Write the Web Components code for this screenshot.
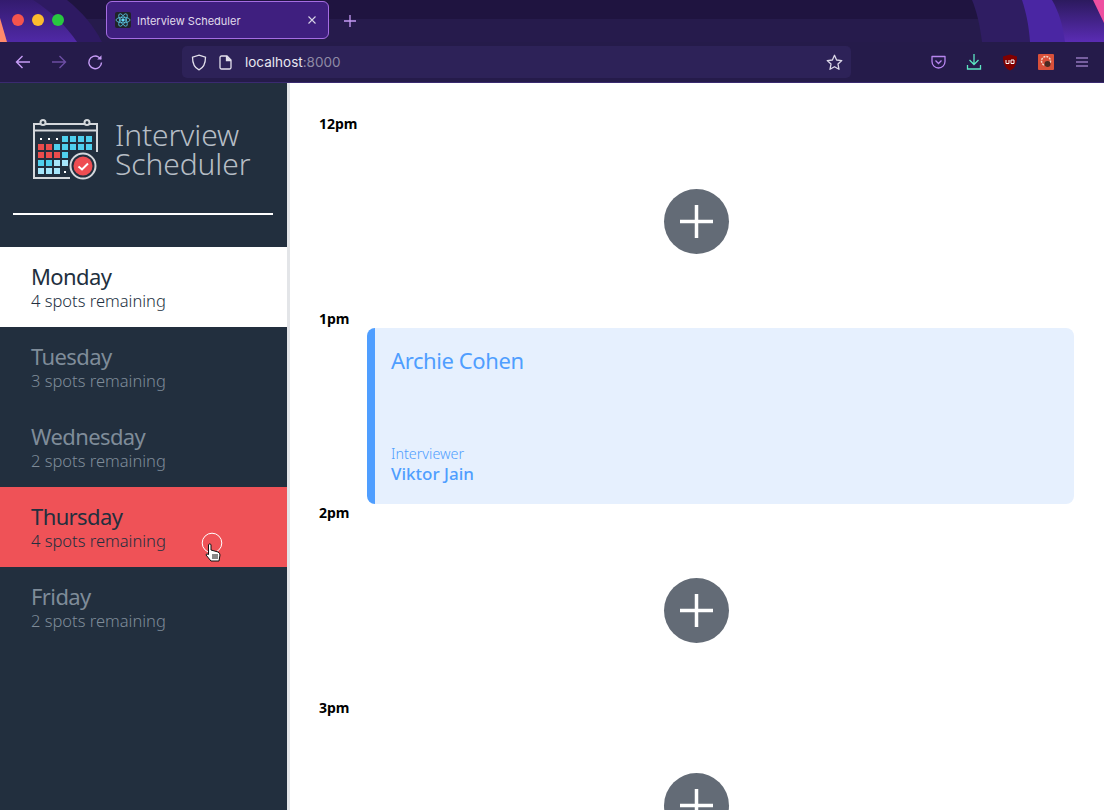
<!DOCTYPE html>
<html>
<head>
<meta charset="utf-8">
<title>Interview Scheduler</title>
<style>
  html, body { margin: 0; height: 100%; overflow: hidden; background: #fff; }
  body { display: flex; flex-direction: column; font-family: "Noto Sans", "Open Sans", sans-serif; }
</style>
</head>
<body>
<browser-chrome></browser-chrome>
<scheduler-app>
  <side-bar slot="nav">
    <day-item name="Monday" spots="4 spots remaining" state="selected"></day-item>
    <day-item name="Tuesday" spots="3 spots remaining"></day-item>
    <day-item name="Wednesday" spots="2 spots remaining"></day-item>
    <day-item name="Thursday" spots="4 spots remaining" state="hover"></day-item>
    <day-item name="Friday" spots="2 spots remaining"></day-item>
  </side-bar>
  <time-slot time="12pm"><add-button></add-button></time-slot>
  <time-slot time="1pm"><show-card student="Archie Cohen" interviewer="Viktor Jain"></show-card></time-slot>
  <time-slot time="2pm"><add-button></add-button></time-slot>
  <time-slot time="3pm"><add-button></add-button></time-slot>
</scheduler-app>

<script>
class BrowserChrome extends HTMLElement {
    constructor() {
        super();
        this.attachShadow({ mode: 'open' });
    }

    static get styles() {
        return `
        :host { display: block; height: 83px; flex: none; position: relative; background: #251b4a; color: #fbfbfe; font-family: "Inter", "Liberation Sans", sans-serif; overflow: hidden; }
        .art { position: absolute; left: 0; top: 0; }
        .tabs { position: relative; height: 42px; display: flex; align-items: flex-start; }
        .lights { display: flex; gap: 8px; padding: 14px 0 0 12px; width: 94px; }
        .lights i { width: 12px; height: 12px; border-radius: 50%; }
        .tab { margin-top: 1px; width: 223px; height: 38px; box-sizing: border-box; border: 1px solid #a56de2; border-radius: 6px; background: #3f1f7f; display: flex; align-items: center; padding: 2px 11px 0 8px; font-size: 11px; color: #e0dcec; }
        .favicon { width: 16px; height: 16px; background: #20232a; border-radius: 2px; margin-right: 6px; margin-top: -2px; }
        .tab span { flex: 1; }
        .tab .close { margin-top: -2px; }
        .plus { margin: 14px 0 0 14px; }
        .bar { position: relative; height: 40px; display: flex; align-items: center; border-bottom: 1px solid #3a2a70; }
        .nav { display: flex; gap: 20px; width: 182px; padding-left: 15px; box-sizing: border-box; }
        .url { width: 669px; height: 32px; background: #2d2258; border-radius: 5px; display: flex; align-items: center; padding: 0 8px 0 9px; box-sizing: border-box; font-size: 13.5px; color: #e8e6f0; }
        .url .port { color: #8f8aa5; }
        .url .addr { flex: 1; margin-left: 13px; }
        .url .page { margin-left: 12px; }
        .tools { flex: 1; display: flex; align-items: center; padding-left: 69px; }
        .tools b { width: 36px; display: flex; justify-content: center; }
        svg { display: block; flex: none; }
        `;
    }

    connectedCallback() {
        this.render();
    }

    render() {
        this.shadowRoot.innerHTML = /* html */`
            <style>${BrowserChrome.styles}</style>
            <svg class="art" width="1104" height="83" viewBox="0 0 1104 83">
                <defs>
                    <linearGradient id="band" x1="0" y1="0" x2="0" y2="1">
                        <stop offset="0" stop-color="#331b6e"/>
                        <stop offset="1" stop-color="#5029a6"/>
                    </linearGradient>
                    <linearGradient id="band2" x1="0" y1="0" x2="0" y2="1">
                        <stop offset="0" stop-color="#2c1a5e"/>
                        <stop offset="1" stop-color="#5a2cb4"/>
                    </linearGradient>
                </defs>
                <rect width="1104" height="19" fill="#1f1440"/>
                <rect y="19" width="1104" height="23" fill="#261b4c"/>
                <path d="M0 0H67C82 12 94 26 102 42H0Z" fill="#2e1a62"/>
                <path d="M0 0H33C52 12 66 26 77 42H0Z" fill="url(#band)"/>
                <path d="M0 18L7 42H0Z" fill="#ff8a6b"/>
                <path d="M972 0H1104V42H982C980 26 977 12 972 0Z" fill="#2f1d62"/>
                <path d="M1022 0H1104V42H1030C1029 26 1026 12 1022 0Z" fill="#4a26a3"/>
                <path d="M1052 0H1104V42H1065C1063 26 1059 12 1052 0Z" fill="url(#band2)"/>
                <path d="M1093 0H1104V23Z" fill="#ee4fa0"/>
            </svg>
            <div class="tabs">
                <div class="lights">
                    <i style="background:#f5544d"></i><i style="background:#fcbc2e"></i><i style="background:#28c840"></i>
                </div>
                <div class="tab">
                    <svg class="favicon" viewBox="0 0 16 16" fill="none" stroke="#61dafb" stroke-width=".7">
                        <circle cx="8" cy="8" r="1.3" fill="#61dafb"/>
                        <ellipse cx="8" cy="8" rx="7" ry="2.8"/>
                        <ellipse cx="8" cy="8" rx="7" ry="2.8" transform="rotate(60 8 8)"/>
                        <ellipse cx="8" cy="8" rx="7" ry="2.8" transform="rotate(120 8 8)"/>
                    </svg>
                    <span>Interview Scheduler</span>
                    <svg class="close" width="10" height="10" viewBox="0 0 10 10" stroke="#d8d4e6" stroke-width="1.1"><path d="M1.5 1.5l7 7M8.5 1.5l-7 7"/></svg>
                </div>
                <svg class="plus" width="14" height="14" viewBox="0 0 14 14" stroke="#c59bf5" stroke-width="1.3"><path d="M7 1v12M1 7h12"/></svg>
            </div>
            <div class="bar">
                <div class="nav">
                    <svg width="16" height="16" viewBox="0 0 16 16" fill="none" stroke="#c69cf6" stroke-width="1.4"><path d="M15 8H1.5M7.5 2L1.5 8l6 6"/></svg>
                    <svg width="16" height="16" viewBox="0 0 16 16" fill="none" stroke="#6c4da3" stroke-width="1.4"><path d="M1 8h13.5M8.5 2l6 6-6 6"/></svg>
                    <svg width="16" height="16" viewBox="0 0 16 16" fill="none" stroke="#c69cf6" stroke-width="1.4"><path d="M14.5 8.5A6.3 6.3 0 1 1 11.5 3L14 5"/><path d="M14.5 1.2V5.500H10.200" fill="#c69cf6" stroke="none"/></svg>
                </div>
                <div class="url">
                    <svg width="16" height="17" viewBox="0 0 16 17" fill="none" stroke="#e3e0ec" stroke-width="1.3"><path d="M8 1.200L14.500 3.200C14.500 9 13 13.500 8 15.800 3 13.500 1.500 9 1.500 3.200Z"/></svg>
                    <svg class="page" width="13" height="15" viewBox="0 0 13 15" fill="none" stroke="#e3e0ec" stroke-width="1.3"><path d="M2.500 1H8L12 5V12.500A1.500 1.500 0 0 1 10.500 14H2.500A1.500 1.500 0 0 1 1 12.500V2.500A1.500 1.500 0 0 1 2.500 1Z"/><path d="M7.500 1V5.500H12" fill="#e3e0ec"/></svg>
                    <span class="addr">localhost<span class="port">:8000</span></span>
                    <svg width="17" height="17" viewBox="0 0 17 17" fill="none" stroke="#dcd8e8" stroke-width="1.3" stroke-linejoin="round"><path d="M8.500 1.300L10.600 6 15.800 6.600 12 10.100 13 15.300 8.500 12.700 4 15.300 5 10.100 1.200 6.600 6.400 6Z"/></svg>
                </div>
                <div class="tools">
                    <b><svg width="15" height="14" viewBox="0 0 15 14" fill="none" stroke="#b886f0" stroke-width="1.3"><path d="M1 1.500H14V6.500A6.500 6.500 0 0 1 1 6.500Z" stroke-linejoin="round"/><path d="M4.500 5.500L7.500 8.500 10.500 5.500"/></svg></b>
                    <b><svg width="16" height="16" viewBox="0 0 16 16" fill="none" stroke="#5ce6c2" stroke-width="1.3"><path d="M8 0V10M3.500 6L8 10.500 12.500 6M1.500 11V15H14.500V11"/></svg></b>
                    <b><svg width="16" height="17" viewBox="0 0 16 17"><path d="M8 0.500L15 2.500C15 9 13.500 14 8 16.500 2.500 14 1 9 1 2.500Z" fill="#800000"/><path d="M4 6V9.500H7V6M9 6H12V9.500H9Z" fill="none" stroke="#fff" stroke-width="1"/></svg></b>
                    <b><svg width="16" height="16" viewBox="0 0 16 16"><rect width="16" height="16" rx="1" fill="#d9503a"/><circle cx="8" cy="7" r="4.500" fill="none" stroke="#f6d5c8" stroke-width="1.500" stroke-dasharray="2 1"/><circle cx="9.500" cy="10" r="3" fill="#4a2a22"/></svg></b>
                    <b><svg width="12" height="10" viewBox="0 0 12 10" stroke="#c9a3f5" stroke-width="1.200"><path d="M0 1h12M0 5h12M0 9h12"/></svg></b>
                </div>
            </div>
        `;
    }
}

class SchedulerApp extends HTMLElement {
    constructor() {
        super();
        this.attachShadow({ mode: 'open' });
    }

    connectedCallback() {
        this.shadowRoot.innerHTML = /* html */`
            <style>
            :host { display: flex; flex: 1; min-height: 0; overflow: hidden; }
            main { flex: 1; padding: 33px 30px 0 29px; }
            </style>
            <slot name="nav"></slot>
            <main><slot></slot></main>
        `;
    }
}

class SideBar extends HTMLElement {
    constructor() {
        super();
        this.attachShadow({ mode: 'open' });
    }

    connectedCallback() {
        this.shadowRoot.innerHTML = /* html */`
            <style>
            :host { display: flex; flex-direction: column; width: 287px; flex: none; background: #222f3e; border-right: 3px solid #e3e5e8; box-sizing: content-box; }
            header { height: 164px; box-sizing: border-box; padding: 36px 13px 0; }
            .brand { display: flex; align-items: center; gap: 17px; padding-left: 20px; height: 61px; color: #b6bdc5; font: 300 30px/29px "Noto Sans", sans-serif; }
            .brand span { margin-top: -2px; letter-spacing: -.1px; }
            hr { border: 0; height: 2px; background: #fff; margin: 33px 1px 0 0; }
            .cells rect { width: 6px; height: 6px; }
            </style>
            <header>
                <div class="brand">
                    <svg width="65" height="61" viewBox="0 0 65 61" style="flex:none">
                        <g fill="none" stroke="#d5d8dc" stroke-width="2">
                            <path d="M37 59H1V5H64V33"/>
                            <path d="M1 11.500H64"/>
                            <circle cx="10" cy="3.500" r="2.500" fill="#222f3e"/>
                            <circle cx="54" cy="3.500" r="2.500" fill="#222f3e"/>
                        </g>
                        <g fill="#fff"><rect x="7" y="19" width="2" height="2"/><rect x="15" y="19" width="2" height="2"/><rect x="23" y="19" width="2" height="2"/></g>
                        <g class="cells" fill="#4fd0ee">
                            <rect x="29" y="17"/><rect x="37" y="17"/><rect x="45" y="17"/><rect x="53" y="17"/>
                            <rect x="21" y="25"/><rect x="29" y="25"/><rect x="37" y="25"/><rect x="45" y="25"/><rect x="53" y="25"/>
                            <rect x="29" y="33"/><rect x="5" y="41"/><rect x="13" y="41"/>
                        </g>
                        <g class="cells" fill="#ea4c4c">
                            <rect x="5" y="25"/><rect x="13" y="25"/>
                            <rect x="5" y="33"/><rect x="13" y="33"/><rect x="21" y="33"/>
                        </g>
                        <g class="cells" fill="#a6e6fb">
                            <rect x="21" y="41"/><rect x="29" y="41"/>
                            <rect x="5" y="49"/><rect x="13" y="49"/><rect x="21" y="49"/>
                        </g>
                        <rect x="31" y="52" width="2" height="2" fill="#fff"/>
                        <circle cx="50" cy="47" r="12.500" fill="#222f3e" stroke="#d5d8dc" stroke-width="2"/>
                        <circle cx="50" cy="47" r="9.500" fill="#ee4d52"/>
                        <path d="M45.500 47.500L49 50.500 55 44.500" fill="none" stroke="#fff" stroke-width="2"/>
                    </svg>
                    <span>Interview<br>Scheduler</span>
                </div>
                <hr>
            </header>
            <slot></slot>
        `;
    }
}

class DayItem extends HTMLElement {
    constructor() {
        super();
        this.attachShadow({ mode: 'open' });
    }

    connectedCallback() {
        const hover = this.getAttribute('state') === 'hover';
        this.shadowRoot.innerHTML = /* html */`
            <style>
            :host { display: block; position: relative; height: 80px; box-sizing: border-box; padding: 14px 0 0 31px; color: #7f8c99; font-family: "Noto Sans", sans-serif; }
            :host([state=selected]) { background: #fff; color: #222f3e; }
            :host([state=hover]) { background: #ef5257; color: #222f3e; }
            h2 { margin: 0; font-size: 22px; line-height: 30px; font-weight: 450; letter-spacing: -.6px; }
            p { margin: 0; font-size: 16.5px; line-height: 20px; font-weight: 300; }
            .cursor { position: absolute; left: 200px; top: 43px; }
            </style>
            <h2>${this.getAttribute('name')}</h2>
            <p>${this.getAttribute('spots')}</p>
            ${hover ? /* html */`
            <svg class="cursor" width="24" height="33" viewBox="0 0 24 33">
                <circle cx="12" cy="13" r="9.800" fill="#ef5257" stroke="#fff" stroke-width="1"/>
                <path d="M8.500 15C8.500 13.500 11 13.500 11 15V20L18 22Q20 23 20 25L19 31H11L6 25Q6 23 8.500 24.500Z" fill="#fff" stroke="#111" stroke-width="1"/>
                <path d="M13 24v5M15 24v5M17 24v5" stroke="#111" stroke-width="1"/>
            </svg>` : ''}
        `;
    }
}

class TimeSlot extends HTMLElement {
    constructor() {
        super();
        this.attachShadow({ mode: 'open' });
    }

    connectedCallback() {
        this.shadowRoot.innerHTML = /* html */`
            <style>
            :host { display: flow-root; height: 194.5px; font-family: "Noto Sans", sans-serif; }
            h4 { margin: -1px 0 0; height: 21px; font-size: 14px; line-height: 17px; font-weight: 700; color: #000; }
            section { padding-left: 48px; margin-top: -3px; }
            </style>
            <h4>${this.getAttribute('time')}</h4>
            <section><slot></slot></section>
        `;
    }
}

class AddButton extends HTMLElement {
    constructor() {
        super();
        this.attachShadow({ mode: 'open' });
    }

    connectedCallback() {
        this.shadowRoot.innerHTML = /* html */`
            <style>
            :host { display: flex; justify-content: center; padding: 56px 48px 0 0; }
            div { width: 65px; height: 65px; border-radius: 50%; background: #636b76; display: flex; align-items: center; justify-content: center; }
            </style>
            <div>
                <svg width="33" height="33" viewBox="0 0 33 33" stroke="#fff" stroke-width="3.5"><path d="M16.500 0V33M0 16.500H33"/></svg>
            </div>
        `;
    }
}

class ShowCard extends HTMLElement {
    constructor() {
        super();
        this.attachShadow({ mode: 'open' });
    }

    connectedCallback() {
        this.shadowRoot.innerHTML = /* html */`
            <style>
            :host { display: flex; flex-direction: column; height: 176px; box-sizing: border-box; background: #e6f0fe; border-left: 8px solid #4f9eff; border-radius: 8px; padding: 16px 16px 19px 16px; color: #4f9eff; font-family: "Noto Sans", sans-serif; }
            h2 { margin: 0; flex: 1; font-size: 22px; line-height: 32px; font-weight: 400; letter-spacing: -.4px; }
            h4 { margin: 0; font-size: 14.3px; line-height: 18px; font-weight: 300; }
            h3 { margin: 0; font-size: 17px; line-height: 22px; font-weight: 500; }
            </style>
            <h2>${this.getAttribute('student')}</h2>
            <h4>Interviewer</h4>
            <h3>${this.getAttribute('interviewer')}</h3>
        `;
    }
}

customElements.define('browser-chrome', BrowserChrome);
customElements.define('scheduler-app', SchedulerApp);
customElements.define('side-bar', SideBar);
customElements.define('day-item', DayItem);
customElements.define('time-slot', TimeSlot);
customElements.define('add-button', AddButton);
customElements.define('show-card', ShowCard);
</script>
</body>
</html>
